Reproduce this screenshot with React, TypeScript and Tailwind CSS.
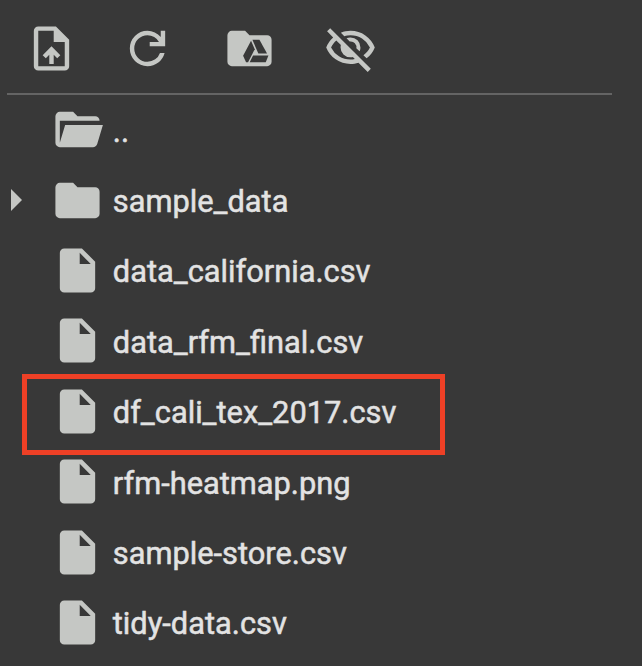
import type { ReactNode } from 'react';

const FILE = 'M240-80q-33 0-56.5-23.5T160-160v-640q0-33 23.5-56.5T240-880h320l240 240v480q0 33-23.5 56.5T720-80H240Zm280-520h200L520-800v200Z';
const FOLDER = 'M160-160q-33 0-56.5-23.5T80-240v-480q0-33 23.5-56.5T160-800h240l80 80h320q33 0 56.5 23.5T880-640v400q0 33-23.5 56.5T800-160H160Z';
const FOLDER_OPEN = 'M160-160q-33 0-56.5-23.5T80-240v-480q0-33 23.5-56.5T160-800h240l80 80h320q33 0 56.5 23.5T880-640H160v400l96-320h684L837-217q-8 26-29.5 41.5T760-160H160Z';
const UPLOAD = 'M440-200h80v-167l64 64 56-57-160-160-160 160 57 56 63-63v167ZM240-80q-33 0-56.5-23.5T160-160v-640q0-33 23.5-56.5T240-880h320l240 240v480q0 33-23.5 56.5T720-80H240Zm280-520v-200H240v640h480v-440H520Z';
const REFRESH = 'M480-160q-134 0-227-93t-93-227q0-134 93-227t227-93q69 0 132 28.5T720-690v-110h80v280H520v-80h168q-32-56-87.5-88T480-720q-100 0-170 70t-70 170q0 100 70 170t170 70q77 0 139-44t87-116h84q-28 106-114 173t-196 67Z';
const HIDDEN = 'm644-428-58-58q9-47-27-88t-93-32l-58-58q17-8 34.5-12t37.5-4q75 0 127.5 52.5T660-500q0 20-4 37.5T644-428Zm128 126-58-56q38-29 67.5-63.5T832-500q-50-101-143.5-160.5T480-720q-29 0-57 4t-55 12l-62-62q41-17 84-25.5t90-8.5q151 0 269 83.5T920-500q-23 59-60.5 109.5T772-302Zm20 246L624-222q-35 11-70.5 16.5T480-200q-151 0-269-83.5T40-500q21-53 53-98.5t73-81.5L56-792l56-56 736 736-56 56ZM222-624q-29 26-53 57t-41 67q50 101 143.5 160.5T480-280q20 0 39-2.5t39-5.5l-36-38q-11 3-21 4.5t-21 1.5q-75 0-127.5-52.5T300-500q0-11 1.5-21t4.5-21l-84-82Z';

function Icon({ d, children }: { d: string; children?: ReactNode }) {
  return (
    <svg viewBox="0 -960 960 960" className="size-[53px] shrink-0 overflow-visible fill-[#c5c7c4]">
      <path d={d} />
      {children}
    </svg>
  );
}

const entries = [
  { name: '..', icon: FOLDER_OPEN },
  { name: 'sample_data', icon: FOLDER, expandable: true },
  { name: 'data_california.csv', icon: FILE },
  { name: 'data_rfm_final.csv', icon: FILE },
  { name: 'df_cali_tex_2017.csv', icon: FILE, highlighted: true },
  { name: 'rfm-heatmap.png', icon: FILE },
  { name: 'sample-store.csv', icon: FILE },
  { name: 'tidy-data.csv', icon: FILE },
];

export default function App() {
  return (
    <div className="h-[666px] w-[642px] overflow-hidden bg-[#383838] font-['Roboto',sans-serif] text-[#e3e3e3]">
      <div className="ml-[7px] flex h-[95px] w-[605px] items-start gap-[48.3px] border-b-2 border-[#646464] pt-[22px] pl-[18px]">
        <Icon d={UPLOAD} />
        <div className="-ml-[5px]">
          <Icon d={REFRESH} />
        </div>
        <Icon d={FOLDER}>
          <g className="fill-[#383838]">
            <path d="M508-619L575-468L454-233H418L364-348Z" />
            <path d="M533-637H660L798-390H641Z" />
            <path d="M545-354H823L774-233H484Z" />
          </g>
        </Icon>
        <Icon d={HIDDEN} />
      </div>
      <ul className="-mt-[0.5px]">
        {entries.map((e) => (
          <li key={e.name} className="relative flex h-[70.4px] items-center pl-[11px]">
            <svg viewBox="0 0 11 22" className="h-[22px] w-[11px] fill-[#c5c7c4]">
              {e.expandable && <path d="M0 0L11 11L0 22Z" />}
            </svg>
            <div className="ml-[29px] flex items-center gap-[8.8px]">
              <Icon d={e.icon} />
              <span className="pt-[4px] text-[30.8px] leading-[36px] [-webkit-text-stroke:0.5px_#e3e3e3]">{e.name}</span>
            </div>
            {e.highlighted && <div className="absolute -top-[2.5px] left-[22px] h-[81px] w-[423px] border-[5px] border-[#ee4026]" />}
          </li>
        ))}
      </ul>
    </div>
  );
}
